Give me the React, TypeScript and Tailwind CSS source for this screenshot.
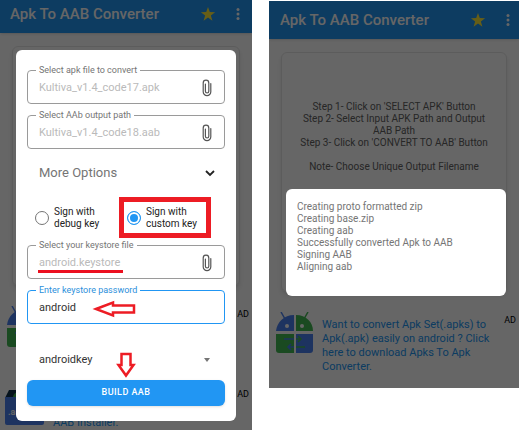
import { useState, type ReactNode } from 'react'

const LOG_LINES = [
  'Creating proto formatted zip',
  'Creating base.zip',
  'Creating aab',
  'Successfully converted Apk to AAB',
  'Signing AAB',
  'Aligning aab'
]

function AppBar({ className }: { className: string }) {
  return (
    <header className={`flex items-center bg-[#2196f3] shadow ${className}`}>
      <h1 className="flex-1 whitespace-nowrap text-[15px] leading-5 font-medium text-white">Apk To AAB Converter</h1>
      <button type="button" aria-label="Favorite" className="mr-4">
        <svg viewBox="0 0 24 24" className="h-4 w-4" fill="#ffeb3b">
          <path d="M12 1.500l2.700 7.600 8 .2-6.400 4.900 2.300 7.800L12 17.400 5.400 22l2.300-7.800L1.300 9.300l8-.2z" />
        </svg>
      </button>
      <button type="button" aria-label="Menu">
        <svg viewBox="0 0 12 16" className="h-4 w-3" fill="#ffffff">
          <circle cx="6" cy="3.500" r="1.500" />
          <circle cx="6" cy="8" r="1.500" />
          <circle cx="6" cy="12.500" r="1.500" />
        </svg>
      </button>
    </header>
  )
}

function Card({ children }: { children?: ReactNode }) {
  return (
    <div className="mx-3 mt-[13px] h-60 rounded-md border border-black/10 px-4 pt-12 text-center text-[10px] leading-3 text-[#616161] shadow-md">
      {children}
    </div>
  )
}

function ApksIcon() {
  return (
    <svg viewBox="0 0 38 42" className="h-[42px] w-[38px] shrink-0">
      <path d="M0 19C1 10 8 3 18 3v16z" fill="#4a80f0" />
      <path d="M20 3c10 0 17 7 17 16H20z" fill="#43b854" />
      <path d="M9 7L5 0" stroke="#4a80f0" strokeWidth="1.500" />
      <path d="M28 7l4-7" stroke="#43b854" strokeWidth="1.500" />
      <circle cx="11" cy="14" r="2" fill="#ffffff" />
      <circle cx="26" cy="14" r="2" fill="#ffffff" />
      <path d="M0 22h18v19H3q-3 0-3-3z" fill="#43b854" />
      <path d="M20 22h17v16q0 3-3 3H20z" fill="#4a80f0" />
      <path d="M8 27h10" stroke="#4a80f0" strokeWidth="1.500" />
      <path d="M20 27h5M22 24l3 3-3 3" stroke="#43b854" strokeWidth="1.500" fill="none" />
      <path d="M18 35h-6M15 32l-3 3 3 3" stroke="#4a80f0" strokeWidth="1.500" fill="none" />
      <path d="M20 35h9" stroke="#43b854" strokeWidth="1.500" />
    </svg>
  )
}

function AabIcon() {
  return (
    <svg viewBox="0 0 40 36" className="h-9 w-10 shrink-0">
      <path d="M4 0h32l4 8H0z" fill="#10304a" />
      <path d="M8 7q1-5 6-5h12q5 0 7 5z" fill="#43b854" />
      <path d="M0 7h39v26q0 2-2 2H2q-2 0-2-2z" fill="#4a80f0" />
      <text x="3" y="25" fontSize="9" fontWeight="700" fill="#ffffff">.aab</text>
    </svg>
  )
}

function Promo({ icon, children }: { icon: ReactNode; children: ReactNode }) {
  return (
    <div className="flex pl-[7px] pr-[3px]">
      {icon}
      <a href="#download" className="ml-2 flex-1 pt-[6px] text-[11px] leading-[14px] text-[#2196f3]">
        {children}
      </a>
      <span className="ml-2 pt-[2px] text-[9px] leading-3 text-black">AD</span>
    </div>
  )
}

function PaperclipIcon() {
  return (
    <svg viewBox="0 0 10 18" className="h-[18px] w-[10px]" fill="none" stroke="#555555" strokeWidth="1.200" strokeLinecap="round">
      <path d="M8.800 4.500v8.300a3.800 3.800 0 0 1-7.600 0V4a2.800 2.800 0 0 1 5.600 0v8.300a1.700 1.700 0 0 1-3.400 0V5" />
    </svg>
  )
}

function Field({ id, label, value, active, children }: {
  id: string
  label: string
  value: string
  active?: boolean
  children?: ReactNode
}) {
  const [text, setText] = useState(value)

  return (
    <fieldset
      className={`relative h-10 min-w-0 rounded border px-2 ${active ? 'border-[#2196f3]' : 'border-[#9a9a9a]'}`}
    >
      <legend className="px-[3px] leading-3">
        <label
          htmlFor={id}
          className={`block text-[9px] leading-3 ${active ? 'text-[#2b8fdb]' : 'text-[#757575]'}`}
        >
          {label}
        </label>
      </legend>
      <div className="flex h-6 items-center pl-[3px] pr-1">
        <input
          id={id}
          value={text}
          onChange={e => setText(e.target.value)}
          className={`min-w-0 flex-1 text-[11px] leading-4 outline-none ${active ? 'text-[#333333]' : 'text-[#bababa]'}`}
        />
        {!active && (
          <button type="button" aria-label={`Browse: ${label}`}>
            <PaperclipIcon />
          </button>
        )}
      </div>
      {children}
    </fieldset>
  )
}

function KeyOption({ checked, onSelect, children }: {
  checked: boolean
  onSelect: () => void
  children: ReactNode
}) {
  return (
    <label className="flex items-center gap-[5px] text-[10px] leading-3 text-[#222222]">
      <input
        type="radio"
        name="signing-key"
        checked={checked}
        onChange={onSelect}
        className="h-[14px] w-[14px] shrink-0 appearance-none rounded-full border border-[#757575] checked:border-[#2196f3] checked:bg-[#2196f3] checked:shadow-[inset_0_0_0_2px_#ffffff]"
      />
      <span>{children}</span>
    </label>
  )
}

function ConvertDialog() {
  const [key, setKey] = useState<'debug' | 'custom'>('custom')

  return (
    <div role="dialog" aria-label="Convert" className="w-full rounded-md bg-white px-[11px] pt-[14px] pb-[15px]">
      <div className="flex flex-col gap-[5px]">
        <Field id="apk" label="Select apk file to convert" value="Kultiva_v1.4_code17.apk" />
        <Field id="aab" label="Select AAb output path" value="Kultiva_v1.4_code18.aab" />
      </div>

      <button type="button" className="flex h-12 w-full items-center justify-between pl-3 pr-[10px] text-[13px] text-[#757575]">
        More Options
        <svg viewBox="0 0 10 7" className="h-[7px] w-[10px]" fill="none" stroke="#222222" strokeWidth="1.800">
          <path d="M1 1l4 4 4-4" />
        </svg>
      </button>

      <div className="flex items-center justify-between pl-2 pr-[14px]">
        <KeyOption checked={key === 'debug'} onSelect={() => setKey('debug')}>
          Sign with<br />debug key
        </KeyOption>
        <div className="flex h-[41px] w-[92px] items-center border-[5px] border-[#ed1c24] pl-[3px]">
          <KeyOption checked={key === 'custom'} onSelect={() => setKey('custom')}>
            Sign with<br />custom key
          </KeyOption>
        </div>
      </div>

      <div className="mt-px flex flex-col gap-[5px]">
        <Field id="keystore" label="Select your keystore file" value="android.keystore">
          <span className="absolute bottom-[2px] left-[10px] h-[3px] w-[85px] bg-[#ec1020]" />
        </Field>
        <Field id="password" label="Enter keystore password" value="android" active>
          <svg viewBox="0 0 44 18" className="absolute bottom-[2px] left-16 h-[18px] w-11" fill="#ffffff" stroke="#ed1c24" strokeWidth="2.500">
            <path d="M4 9L21 2.500v3h21v7H21v3z" />
          </svg>
        </Field>
      </div>

      <div className="relative mt-3 flex h-11 items-center pt-[3px] pl-3 pr-[14px]">
        <select aria-label="Key alias" className="min-w-0 flex-1 appearance-none text-[11px] leading-4 text-[#333333] outline-none">
          <option>androidkey</option>
        </select>
        <svg viewBox="0 0 8 4" className="h-1 w-2" fill="#757575">
          <path d="M1 0h6L4 4z" />
        </svg>
        <svg viewBox="0 0 20 26" className="absolute bottom-[2px] left-[89px] h-[26px] w-5" fill="#ffffff" stroke="#ed1c24" strokeWidth="2.500">
          <path d="M5.500 2h9v11h3L10 23.500 2.500 13h3z" />
        </svg>
      </div>

      <button type="button" className="block h-[26px] w-full rounded-md bg-[#2196f3] text-[9px] font-medium tracking-wider text-white shadow">
        BUILD AAB
      </button>
    </div>
  )
}

function LogDialog() {
  return (
    <div role="dialog" aria-label="Progress" className="w-full rounded-md bg-white px-[11px] pt-3 pb-[23px]">
      {LOG_LINES.map(line => (
        <p key={line} className="text-[10px] leading-3 text-[#757575]">{line}</p>
      ))}
    </div>
  )
}

export default function App() {
  return (
    <div className="flex items-start gap-[17px] bg-white font-['Roboto',sans-serif]">
      <main className="relative h-screen min-w-0 flex-[252] overflow-hidden bg-white">
        <AppBar className="h-[33px] pb-[5px] pl-[10px] pr-2" />
        <Card />
        <div className="mt-5 flex flex-col gap-[18px]">
          <Promo icon={<ApksIcon />}>
            Want to convert Apk Set(.apks) to Apk(.apk) easily on android ? Click here to download Apks To Apk Converter.
          </Promo>
          <Promo icon={<div className="-ml-[2px] pt-1"><AabIcon /></div>}>
            <span className="block pt-6">AAB Installer.</span>
          </Promo>
        </div>
        <div className="absolute inset-0 flex items-start bg-black/60 px-4 pt-[50px]">
          <ConvertDialog />
        </div>
      </main>

      <section className="relative mt-px min-w-0 flex-[250] overflow-hidden bg-white pb-[14px]">
        <AppBar className="h-[38px] pl-[11px] pr-[5px]" />
        <Card>
          <p>Step 1- Click on 'SELECT APK' Button</p>
          <p>Step 2- Select Input APK Path and Output AAB Path</p>
          <p>Step 3- Click on 'CONVERT TO AAB' Button</p>
          <p className="mt-3">Note- Choose Unique Output Filename</p>
        </Card>
        <div className="mt-5">
          <Promo icon={<ApksIcon />}>
            Want to convert Apk Set(.apks) to Apk(.apk) easily on android ? Click here to download Apks To Apk Converter.
          </Promo>
        </div>
        <div className="absolute inset-0 flex items-start bg-black/60 pt-[188px] pr-[13px] pl-[17px]">
          <LogDialog />
        </div>
      </section>
    </div>
  )
}
